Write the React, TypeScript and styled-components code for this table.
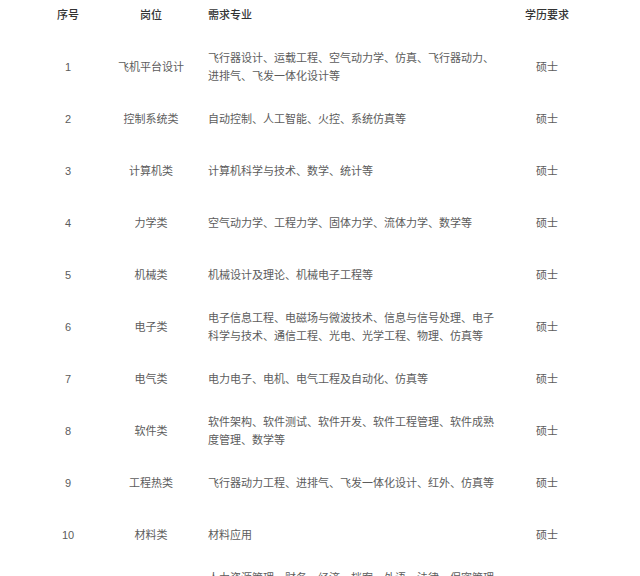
import styled, { createGlobalStyle } from 'styled-components';

const GlobalStyle = createGlobalStyle`
  html, body {
    margin: 0;
    padding: 0;
    background: #ffffff;
  }
  body {
    font-family: 'Liberation Sans', 'Noto Sans CJK SC', sans-serif;
    -webkit-font-smoothing: antialiased;
  }
`;

const StyledTable = styled.div`
  width: 640px;
  height: 576px;
  overflow: hidden;
  padding-left: 40px;
  box-sizing: border-box;
  font-size: 11px;
  line-height: 18px;
`;

const StyledRow = styled.div<{ header?: boolean }>`
  display: grid;
  grid-template-columns: 56px 110px 290px 102px;
  align-items: center;
  height: ${({ header }) => (header ? 30 : 52)}px;
  margin-bottom: ${({ header }) => (header ? 11 : 0)}px;
  color: ${({ header }) => (header ? '#333333' : '#5c5c5c')};
  font-weight: ${({ header }) => (header ? 500 : 400)};
`;

const StyledCell = styled.div<{ left?: boolean }>`
  text-align: ${({ left }) => (left ? 'left' : 'center')};
  padding-left: ${({ left }) => (left ? 2 : 0)}px;
  word-break: break-all;
`;

const rows = [
  { no: '1', post: '飞机平台设计', major: '飞行器设计、运载工程、空气动力学、仿真、飞行器动力、进排气、飞发一体化设计等' },
  { no: '2', post: '控制系统类', major: '自动控制、人工智能、火控、系统仿真等' },
  { no: '3', post: '计算机类', major: '计算机科学与技术、数学、统计等' },
  { no: '4', post: '力学类', major: '空气动力学、工程力学、固体力学、流体力学、数学等' },
  { no: '5', post: '机械类', major: '机械设计及理论、机械电子工程等' },
  { no: '6', post: '电子类', major: '电子信息工程、电磁场与微波技术、信息与信号处理、电子科学与技术、通信工程、光电、光学工程、物理、仿真等' },
  { no: '7', post: '电气类', major: '电力电子、电机、电气工程及自动化、仿真等' },
  { no: '8', post: '软件类', major: '软件架构、软件测试、软件开发、软件工程管理、软件成熟度管理、数学等' },
  { no: '9', post: '工程热类', major: '飞行器动力工程、进排气、飞发一体化设计、红外、仿真等' },
  { no: '10', post: '材料类', major: '材料应用' },
  { no: '11', post: '综合管理类', major: '人力资源管理、财务、经济、档案、外语、法律、保密管理等' },
];

export default function App() {
  return (
    <>
      <GlobalStyle />
      <StyledTable>
        <StyledRow header>
          <StyledCell>序号</StyledCell>
          <StyledCell>岗位</StyledCell>
          <StyledCell left>需求专业</StyledCell>
          <StyledCell>学历要求</StyledCell>
        </StyledRow>
        {rows.map((r) => (
          <StyledRow key={r.no}>
            <StyledCell>{r.no}</StyledCell>
            <StyledCell>{r.post}</StyledCell>
            <StyledCell left>{r.major}</StyledCell>
            <StyledCell>硕士</StyledCell>
          </StyledRow>
        ))}
      </StyledTable>
    </>
  );
}
